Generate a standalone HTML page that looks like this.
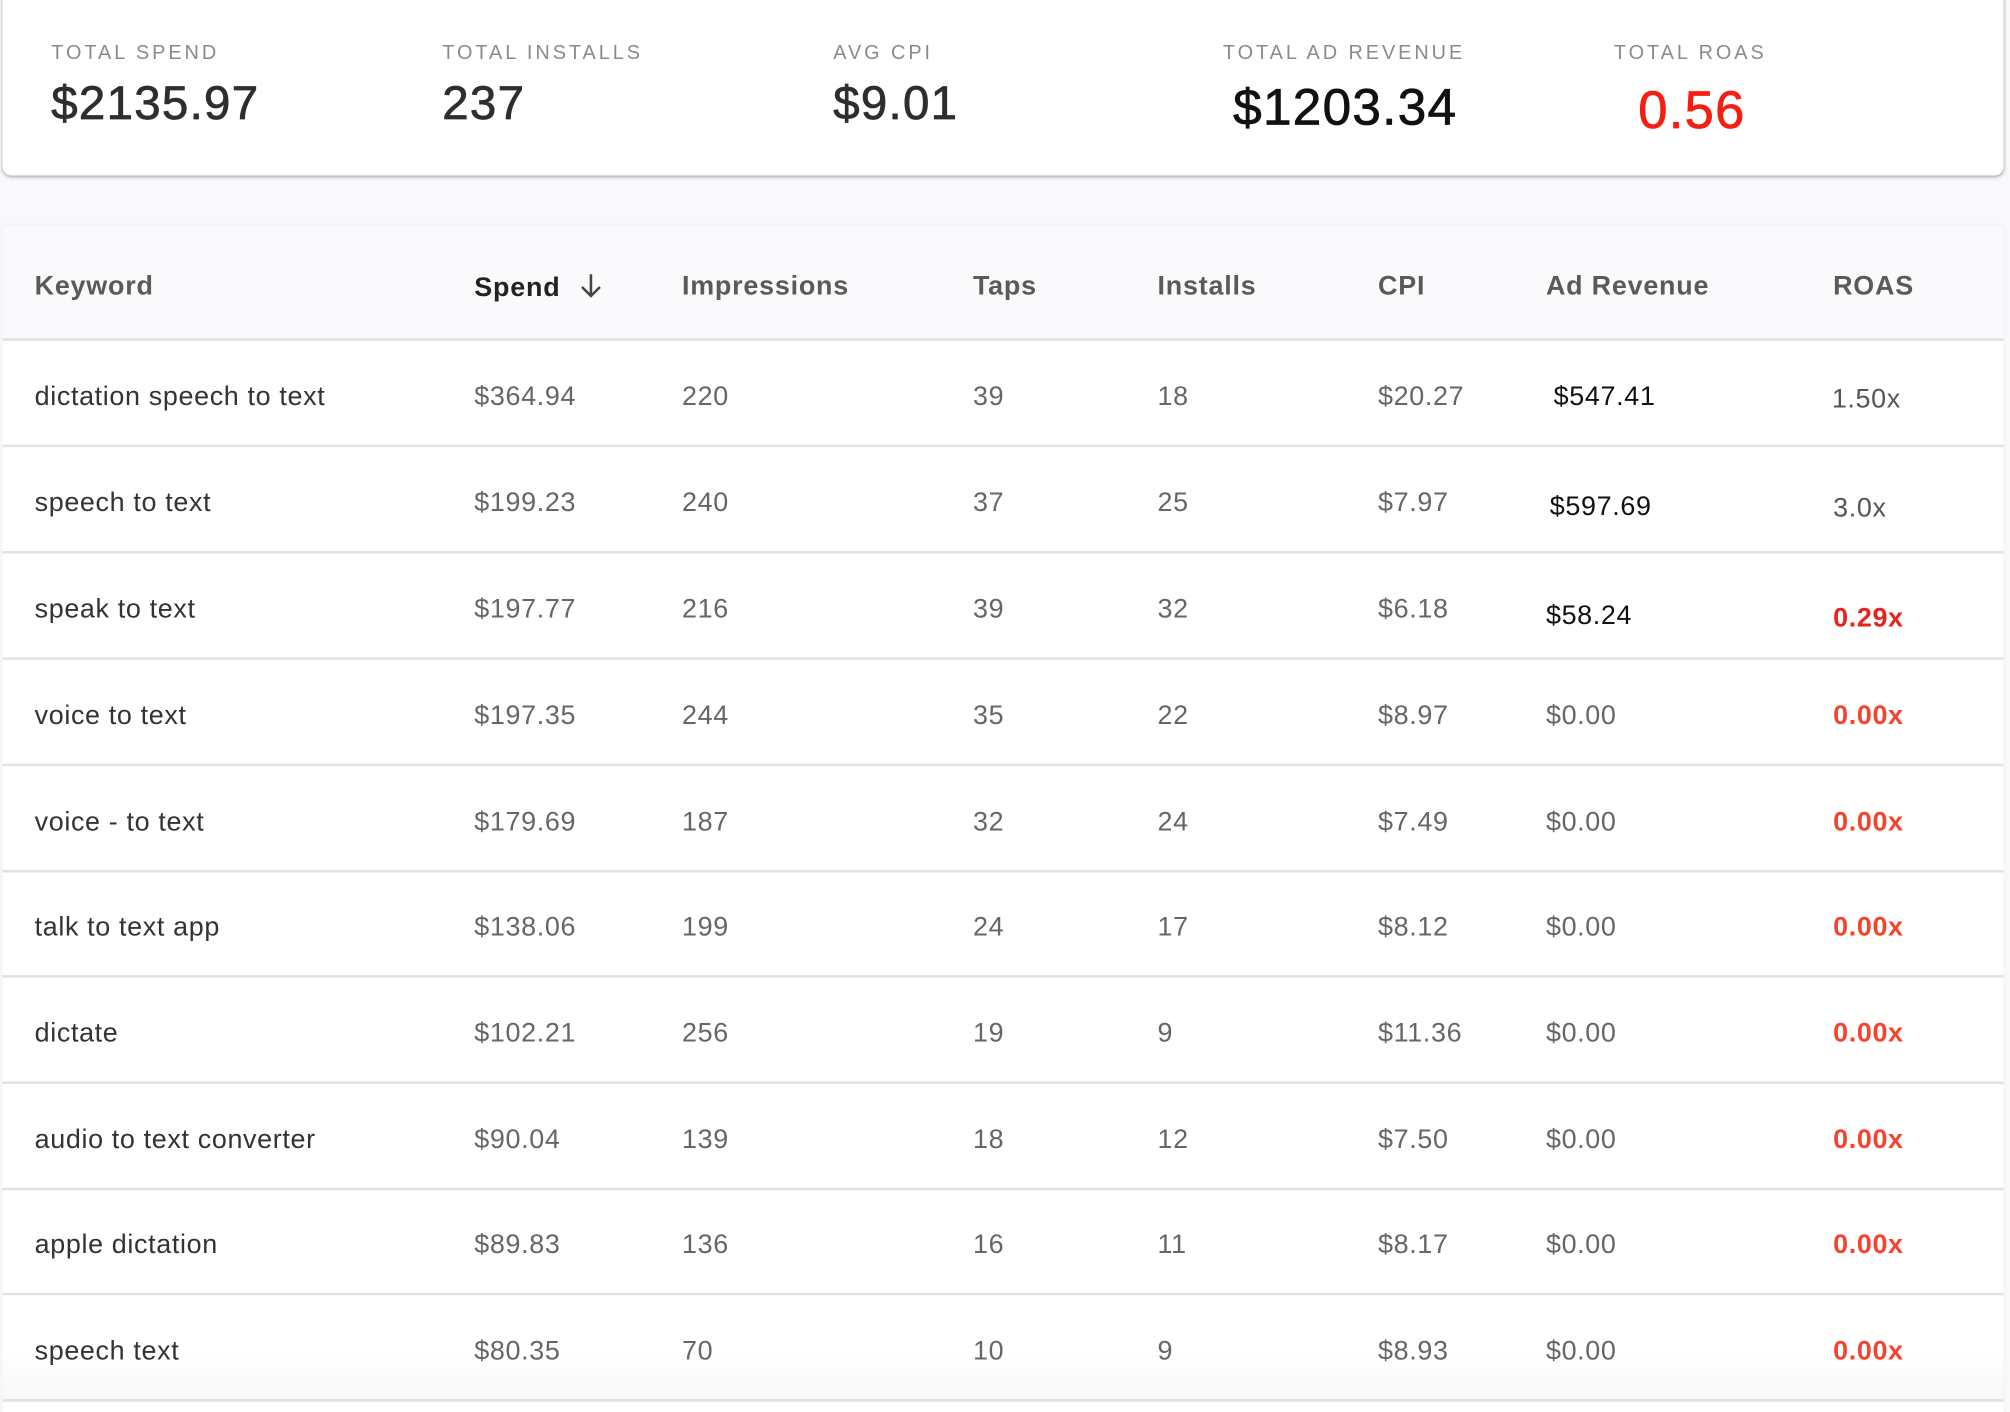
<!DOCTYPE html>
<html><head><meta charset="utf-8"><style>
html,body{margin:0;padding:0;width:2010px;height:1412px;overflow:hidden;background:#f9f8fb;font-family:"Liberation Sans",Arial,sans-serif;}
#w{position:absolute;left:0;top:0;width:1568px;height:1102px;transform:scale(1.28189,1.2813);transform-origin:0 0;}
.card{position:absolute;left:2px;top:-10px;width:1561px;height:147px;background:#fff;border-radius:0 0 7px 7px;box-shadow:0 1px 3px rgba(0,0,0,.35);}
.lab{position:absolute;font-size:15.5px;letter-spacing:2.3px;color:#8a8a8a;}
.val{position:absolute;font-size:37px;color:#2e2e2e;letter-spacing:1px;-webkit-text-stroke:0.6px currentColor;}
.tbl{position:absolute;left:2px;top:176px;width:1561px;height:926px;background:#fff;box-shadow:0 0 2px rgba(0,0,0,.08);}
.hd{position:absolute;left:0;top:0;width:100%;height:88px;background:#faf9fc;border-bottom:2px solid #e2e1e4;}
.h{position:absolute;top:36px;font-size:21px;letter-spacing:0.6px;font-weight:bold;color:#5a5a5a;}
.row{position:absolute;left:0;width:100%;height:81px;border-bottom:2px solid #e2e1e4;}
.c{position:absolute;top:32px;font-size:21px;letter-spacing:0.5px;color:#666;}
.k{color:#333;}
.red{color:#f2442e;font-weight:bold;}
</style></head><body><div id="w">
<div class="card">
<div class="lab" style="left:38px;top:43px">TOTAL SPEND</div>
<div class="lab" style="left:343px;top:43px">TOTAL INSTALLS</div>
<div class="lab" style="left:648px;top:43px">AVG CPI</div>
<div class="lab" style="left:952px;top:43px">TOTAL AD REVENUE</div>
<div class="lab" style="left:1257px;top:43px">TOTAL ROAS</div>
<div class="val" style="left:38px;top:70px">$2135.97</div>
<div class="val" style="left:343px;top:70px">237</div>
<div class="val" style="left:648px;top:70px">$9.01</div>
<div class="val" style="left:960px;top:72px;font-size:40px;color:#111">$1203.34</div>
<div class="val" style="left:1276px;top:73px;font-size:41px;color:#f61e10">0.56</div>
</div>
<div class="tbl">
<div class="hd">
<div class="h" style="left:25px">Keyword</div>
<div class="h" style="left:368px;color:#222">Spend <svg width="22" height="22" viewBox="0 0 22 22" style="vertical-align:-3px;margin-left:6px"><path d="M11 2v17M4 12l7 7 7-7" fill="none" stroke="#444" stroke-width="2"/></svg></div>
<div class="h" style="left:530px">Impressions</div>
<div class="h" style="left:757px">Taps</div>
<div class="h" style="left:901px">Installs</div>
<div class="h" style="left:1073px">CPI</div>
<div class="h" style="left:1204px">Ad Revenue</div>
<div class="h" style="left:1428px">ROAS</div>
</div>
<div class="row" style="top:90px"><div class="c k" style="left:25px">dictation speech to text</div><div class="c" style="left:368px">$364.94</div><div class="c" style="left:530px">220</div><div class="c" style="left:757px">39</div><div class="c" style="left:901px">18</div><div class="c" style="left:1073px">$20.27</div><div class="c" style="left:1210px;color:#111">$547.41</div><div class="c" style="left:1427px;top:34px;color:#555">1.50x</div></div>
<div class="row" style="top:173px"><div class="c k" style="left:25px">speech to text</div><div class="c" style="left:368px">$199.23</div><div class="c" style="left:530px">240</div><div class="c" style="left:757px">37</div><div class="c" style="left:901px">25</div><div class="c" style="left:1073px">$7.97</div><div class="c" style="left:1207px;top:35px;color:#111">$597.69</div><div class="c" style="left:1428px;top:36px;color:#555">3.0x</div></div>
<div class="row" style="top:256px"><div class="c k" style="left:25px">speak to text</div><div class="c" style="left:368px">$197.77</div><div class="c" style="left:530px">216</div><div class="c" style="left:757px">39</div><div class="c" style="left:901px">32</div><div class="c" style="left:1073px">$6.18</div><div class="c" style="left:1204px;top:37px;color:#111">$58.24</div><div class="c red" style="left:1428px;top:39px;color:#e8231c">0.29x</div></div>
<div class="row" style="top:339px"><div class="c k" style="left:25px">voice to text</div><div class="c" style="left:368px">$197.35</div><div class="c" style="left:530px">244</div><div class="c" style="left:757px">35</div><div class="c" style="left:901px">22</div><div class="c" style="left:1073px">$8.97</div><div class="c" style="left:1204px">$0.00</div><div class="c red" style="left:1428px">0.00x</div></div>
<div class="row" style="top:422px"><div class="c k" style="left:25px">voice - to text</div><div class="c" style="left:368px">$179.69</div><div class="c" style="left:530px">187</div><div class="c" style="left:757px">32</div><div class="c" style="left:901px">24</div><div class="c" style="left:1073px">$7.49</div><div class="c" style="left:1204px">$0.00</div><div class="c red" style="left:1428px">0.00x</div></div>
<div class="row" style="top:504px"><div class="c k" style="left:25px">talk to text app</div><div class="c" style="left:368px">$138.06</div><div class="c" style="left:530px">199</div><div class="c" style="left:757px">24</div><div class="c" style="left:901px">17</div><div class="c" style="left:1073px">$8.12</div><div class="c" style="left:1204px">$0.00</div><div class="c red" style="left:1428px">0.00x</div></div>
<div class="row" style="top:587px"><div class="c k" style="left:25px">dictate</div><div class="c" style="left:368px">$102.21</div><div class="c" style="left:530px">256</div><div class="c" style="left:757px">19</div><div class="c" style="left:901px">9</div><div class="c" style="left:1073px">$11.36</div><div class="c" style="left:1204px">$0.00</div><div class="c red" style="left:1428px">0.00x</div></div>
<div class="row" style="top:670px"><div class="c k" style="left:25px">audio to text converter</div><div class="c" style="left:368px">$90.04</div><div class="c" style="left:530px">139</div><div class="c" style="left:757px">18</div><div class="c" style="left:901px">12</div><div class="c" style="left:1073px">$7.50</div><div class="c" style="left:1204px">$0.00</div><div class="c red" style="left:1428px">0.00x</div></div>
<div class="row" style="top:752px"><div class="c k" style="left:25px">apple dictation</div><div class="c" style="left:368px">$89.83</div><div class="c" style="left:530px">136</div><div class="c" style="left:757px">16</div><div class="c" style="left:901px">11</div><div class="c" style="left:1073px">$8.17</div><div class="c" style="left:1204px">$0.00</div><div class="c red" style="left:1428px">0.00x</div></div>
<div class="row" style="top:835px;background:linear-gradient(#fff 55%,#f8f7fa)"><div class="c k" style="left:25px">speech text</div><div class="c" style="left:368px">$80.35</div><div class="c" style="left:530px">70</div><div class="c" style="left:757px">10</div><div class="c" style="left:901px">9</div><div class="c" style="left:1073px">$8.93</div><div class="c" style="left:1204px">$0.00</div><div class="c red" style="left:1428px">0.00x</div></div>
</div>
</div></body></html>
